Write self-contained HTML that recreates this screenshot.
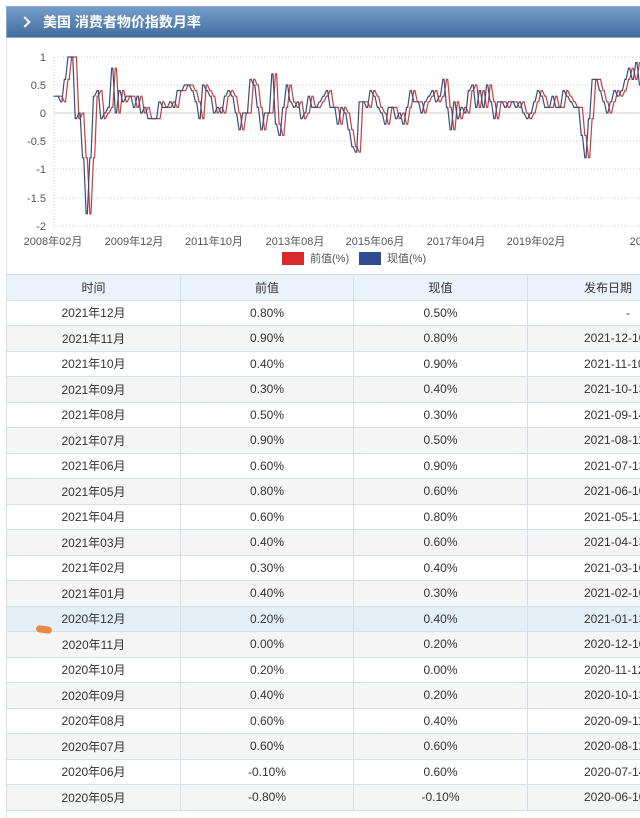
<!DOCTYPE html>
<html><head><meta charset="utf-8"><style>
*{margin:0;padding:0;box-sizing:border-box}
body{width:640px;height:814px;overflow:hidden;background:#fff;font-family:"Liberation Sans","Noto Sans CJK SC",sans-serif;position:relative}
.hdr{position:absolute;left:6px;top:6px;width:640px;height:32px;background:linear-gradient(#749dc9,#416d9f);border:1px solid #8fa9c4;color:#fff;font-size:14px;font-weight:bold;line-height:30px;padding-left:36px}
.hdr:before{content:"";position:absolute;left:14px;top:11px;width:6px;height:6px;border-right:2px solid #fff;border-top:2px solid #fff;transform:rotate(45deg)}
.box{position:absolute;left:6px;top:38px;width:640px;height:780px;border-left:1px solid #dde4ec}
svg{position:absolute;left:0;top:0}
table{position:absolute;left:6px;top:274px;border-collapse:collapse;width:700px;table-layout:fixed;font-size:12px;color:#333}
td,th{height:25.5px;text-align:center;border:1px solid #d5dfea;font-weight:normal;white-space:nowrap;overflow:hidden}
th{background:#eaf3fb}
tr:nth-child(odd) td{background:#f5f5f5}
tr.hl td{background:#e3eff5}
td:nth-child(4),th:nth-child(4){text-align:left;padding-left:56px}
</style></head><body>
<div class="hdr">美国 消费者物价指数月率</div>
<div class="box"></div>
<svg width="640" height="274" id="ch" font-family="Liberation Sans, Noto Sans CJK SC, sans-serif" font-size="11" fill="#555">
<g stroke="#ccc" stroke-dasharray="1,2">
<line x1="54" y1="57" x2="640" y2="57"/><line x1="54" y1="85" x2="640" y2="85"/><line x1="54" y1="141" x2="640" y2="141"/><line x1="54" y1="169" x2="640" y2="169"/><line x1="54" y1="198" x2="640" y2="198"/><line x1="54" y1="226" x2="640" y2="226"/></g>
<line x1="54" y1="113" x2="640" y2="113" stroke="#ccc"/>
<line x1="54" y1="57" x2="54" y2="226" stroke="#ccc" stroke-dasharray="1,2"/>
<g text-anchor="end"><text x="46" y="61">1</text><text x="46" y="89">0.5</text><text x="46" y="117">0</text><text x="46" y="145">-0.5</text><text x="46" y="173">-1</text><text x="46" y="202">-1.5</text><text x="46" y="230">-2</text></g>
<g text-anchor="middle"><text x="53" y="245">2008年02月</text><text x="134" y="245">2009年12月</text><text x="214" y="245">2011年10月</text><text x="295" y="245">2013年08月</text><text x="375" y="245">2015年06月</text><text x="456" y="245">2017年04月</text><text x="536" y="245">2019年02月</text><text x="659" y="245">2020年12月</text></g>
<rect x="282" y="252" width="22" height="13" fill="#d62b2b"/><text x="310" y="262">前值(%)</text>
<rect x="359" y="252" width="22" height="13" fill="#2f4e92"/><text x="387" y="262">现值(%)</text>
<polyline id="r" fill="none" stroke="#d23a3a" stroke-width="1.2"/>
<polyline id="b" fill="none" stroke="#33507f" stroke-width="1.2"/>
</svg>
<script>
var d=[0.3,0.3,0.2,0.6,1.0,1.0,-0.1,0.0,-0.8,-1.8,-0.8,
0.3,0.4,-0.1,0.0,0.1,0.8,0.0,0.4,0.2,0.3,0.3,0.1,
0.3,0.0,0.1,-0.1,-0.1,-0.1,0.2,0.1,0.1,0.2,0.1,0.4,
0.4,0.5,0.5,0.4,0.2,-0.1,0.5,0.4,0.3,0.0,0.1,0.0,
0.3,0.4,0.3,0.0,-0.3,0.0,0.0,0.6,0.5,0.1,-0.3,0.0,
0.0,0.7,-0.2,-0.4,0.1,0.5,0.2,0.1,0.2,-0.1,0.0,0.3,
0.1,0.1,0.2,0.3,0.4,0.1,0.1,-0.2,0.1,0.0,-0.3,-0.6,
-0.7,0.2,0.2,0.1,0.4,0.3,0.1,0.0,-0.2,0.1,0.1,-0.1,
0.0,-0.2,0.1,0.4,0.2,0.2,0.0,0.2,0.3,0.4,0.2,0.3,
0.6,0.1,-0.3,0.2,-0.1,0.1,0.0,0.4,0.5,0.1,0.4,0.1,
0.5,0.2,-0.1,0.2,0.2,0.1,0.2,0.2,0.1,0.2,0.0,-0.1,
0.0,0.2,0.4,0.3,0.1,0.1,0.3,0.1,0.1,0.4,0.3,0.2,
0.1,0.1,-0.4,-0.8,-0.1,0.6,0.6,0.4,0.2,0.0,0.2,0.4,
0.3,0.4,0.6,0.8,0.6,0.9,0.5,0.3,0.4,0.9,0.8,0.5];
function pts(off){var s=[];for(var i=0;i<d.length;i++){var x=54+(i+off)*3.64,y=113-d[i]*56;s.push((x-0.6)+","+y);s.push((x+0.6)+","+y);}return s.join(" ");}
document.getElementById("b").setAttribute("points",pts(0));
document.getElementById("r").setAttribute("points",pts(1));
</script>
<table>
<colgroup><col style="width:174px"><col style="width:173px"><col style="width:174px"><col style="width:179px"></colgroup>
<tr><th>时间</th><th>前值</th><th>现值</th><th>发布日期</th></tr>
<tr><td>2021年12月</td><td>0.80%</td><td>0.50%</td><td style="padding-left:98px">-</td></tr>
<tr><td>2021年11月</td><td>0.90%</td><td>0.80%</td><td>2021-12-10</td></tr>
<tr><td>2021年10月</td><td>0.40%</td><td>0.90%</td><td>2021-11-10</td></tr>
<tr><td>2021年09月</td><td>0.30%</td><td>0.40%</td><td>2021-10-13</td></tr>
<tr><td>2021年08月</td><td>0.50%</td><td>0.30%</td><td>2021-09-14</td></tr>
<tr><td>2021年07月</td><td>0.90%</td><td>0.50%</td><td>2021-08-11</td></tr>
<tr><td>2021年06月</td><td>0.60%</td><td>0.90%</td><td>2021-07-13</td></tr>
<tr><td>2021年05月</td><td>0.80%</td><td>0.60%</td><td>2021-06-10</td></tr>
<tr><td>2021年04月</td><td>0.60%</td><td>0.80%</td><td>2021-05-12</td></tr>
<tr><td>2021年03月</td><td>0.40%</td><td>0.60%</td><td>2021-04-13</td></tr>
<tr><td>2021年02月</td><td>0.30%</td><td>0.40%</td><td>2021-03-10</td></tr>
<tr><td>2021年01月</td><td>0.40%</td><td>0.30%</td><td>2021-02-10</td></tr>
<tr class="hl"><td>2020年12月</td><td>0.20%</td><td>0.40%</td><td>2021-01-13</td></tr>
<tr><td>2020年11月</td><td>0.00%</td><td>0.20%</td><td>2020-12-10</td></tr>
<tr><td>2020年10月</td><td>0.20%</td><td>0.00%</td><td>2020-11-12</td></tr>
<tr><td>2020年09月</td><td>0.40%</td><td>0.20%</td><td>2020-10-13</td></tr>
<tr><td>2020年08月</td><td>0.60%</td><td>0.40%</td><td>2020-09-11</td></tr>
<tr><td>2020年07月</td><td>0.60%</td><td>0.60%</td><td>2020-08-12</td></tr>
<tr><td>2020年06月</td><td>-0.10%</td><td>0.60%</td><td>2020-07-14</td></tr>
<tr><td>2020年05月</td><td>-0.80%</td><td>-0.10%</td><td>2020-06-10</td></tr>
</table>
<div style="position:absolute;left:36px;top:626px;width:16px;height:7px;border-radius:4px;background:#e8894a;transform:rotate(8deg)"></div>
</body></html>
